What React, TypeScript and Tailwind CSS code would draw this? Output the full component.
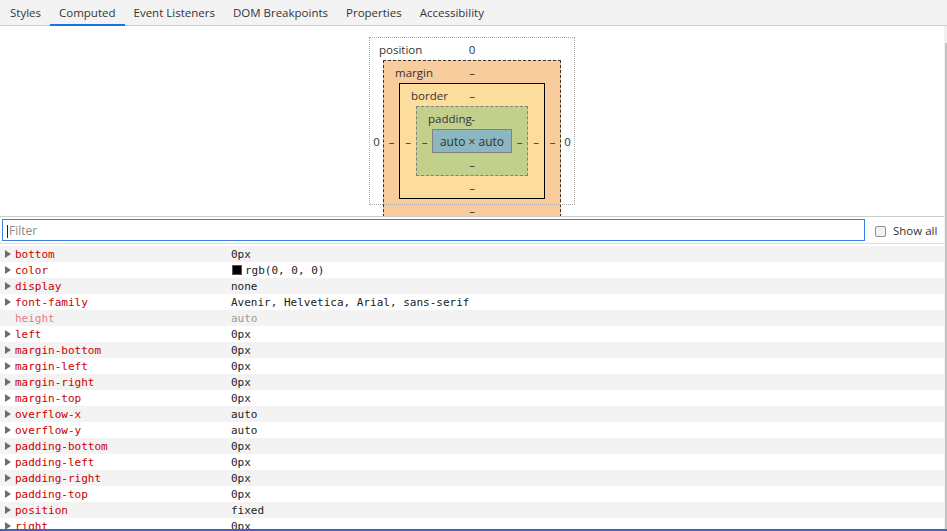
import React from 'react';

const tabs = ['Styles', 'Computed', 'Event Listeners', 'DOM Breakpoints', 'Properties', 'Accessibility'];

interface Prop {
  name: string;
  value: string;
  faded?: boolean;
  swatch?: boolean;
}

const props: Prop[] = [
  { name: 'bottom', value: '0px' },
  { name: 'color', value: 'rgb(0, 0, 0)', swatch: true },
  { name: 'display', value: 'none' },
  { name: 'font-family', value: 'Avenir, Helvetica, Arial, sans-serif' },
  { name: 'height', value: 'auto', faded: true },
  { name: 'left', value: '0px' },
  { name: 'margin-bottom', value: '0px' },
  { name: 'margin-left', value: '0px' },
  { name: 'margin-right', value: '0px' },
  { name: 'margin-top', value: '0px' },
  { name: 'overflow-x', value: 'auto' },
  { name: 'overflow-y', value: 'auto' },
  { name: 'padding-bottom', value: '0px' },
  { name: 'padding-left', value: '0px' },
  { name: 'padding-right', value: '0px' },
  { name: 'padding-top', value: '0px' },
  { name: 'position', value: 'fixed' },
  { name: 'right', value: '0px' },
];

const ui = { fontFamily: '"Open Sans", "Noto Sans", sans-serif' };
const mono = { fontFamily: '"DejaVu Sans Mono", "Liberation Mono", monospace' };

const Triangle = () => (
  <svg width="6" height="8" viewBox="0 0 6 8" className="shrink-0">
    <path d="M0 0 L6 4 L0 8 Z" fill="#6e6e6e" />
  </svg>
);

const BoxModel = () => (
  <div className="relative w-[206px] text-[11.5px] text-[#333] leading-none [&_span]:translate-y-px">
    {/* dotted outline of the position box sits over the overflowing margin box */}
    <div className="absolute left-0 top-0 w-[206px] h-[168px] border border-dotted border-[#a8a8a8] pointer-events-none z-10" />
    <div className="relative h-[23px] flex items-center justify-center pt-px">
      <span className="absolute left-[10px]">position</span>
      <span>0</span>
    </div>
    <div className="flex items-center">
      <div className="w-[14px] flex justify-center pl-px"><span>0</span></div>
      {/* margin */}
      <div className="w-[178px] bg-[#f9cc9d] border border-dashed border-[#333]">
        <div className="relative h-[22px] flex items-center justify-center">
          <span className="absolute left-[11px]">margin</span>
          <span>–</span>
        </div>
        <div className="flex items-center">
          <div className="w-[15px] flex justify-center"><span>–</span></div>
          {/* border */}
          <div className="w-[146px] bg-[#fddd9b] border border-black">
            <div className="relative h-[22px] flex items-center justify-center">
              <span className="absolute left-[11px]">border</span>
              <span>–</span>
            </div>
            <div className="flex items-center">
              <div className="w-[16px] flex justify-center"><span>–</span></div>
              {/* padding */}
              <div className="w-[112px] bg-[#c3d08b] border border-dashed border-[#808080]">
                <div className="relative h-[22px] flex items-center justify-center">
                  <span className="absolute left-[11px]">padding</span>
                  <span className="pl-[2px]">-</span>
                </div>
                <div className="flex items-center">
                  <div className="w-[15px] flex justify-center"><span>–</span></div>
                  <div className="w-[80px] h-[24px] bg-[#8cb6c0] border border-[#808080] flex items-center justify-center text-[12px]">
                    <span>auto × auto</span>
                  </div>
                  <div className="w-[15px] flex justify-center"><span>–</span></div>
                </div>
                <div className="h-[22px] flex items-center justify-center"><span>–</span></div>
              </div>
              <div className="w-[16px] flex justify-center"><span>–</span></div>
            </div>
            <div className="h-[22px] flex items-center justify-center"><span>–</span></div>
          </div>
          <div className="w-[15px] flex justify-center"><span>–</span></div>
        </div>
        <div className="h-[22px] flex items-center justify-center"><span>–</span></div>
      </div>
      <div className="w-[14px] flex justify-center pr-px"><span>0</span></div>
    </div>
    <div className="h-[23px] flex items-center justify-center"><span>0</span></div>
  </div>
);

export default function App() {
  return (
    <div className="w-[947px] h-[531px] overflow-hidden bg-white flex flex-col" style={ui}>
      {/* Tab bar */}
      <div className="flex h-[26px] shrink-0 bg-[#f3f3f3] border-b border-[#cccccc] text-[11.5px] text-[#333] pl-px">
        {tabs.map((t) => (
          <div
            key={t}
            className={
              t === 'Computed'
                ? 'h-[26px] -mb-px flex items-center px-[9px] border-b-2 border-[#1a73e8] pt-[1px]'
                : 'h-[25px] flex items-center px-[9px]'
            }
          >
            {t}
          </div>
        ))}
      </div>

      <div className="flex flex-1 min-h-0 border-b-2 border-[#4a5dc7]">
        <div className="flex-1 flex flex-col min-w-0">
          {/* Box model */}
          <div className="h-[191px] shrink-0 overflow-hidden border-b border-[#cccccc] flex justify-center pt-[11px]">
            <BoxModel />
          </div>

          {/* Filter bar */}
          <div className="h-[27px] shrink-0 flex items-start border-b border-[#e0e0e0]">
            <div className="ml-[2px] mt-[2px] w-[863px] h-[22px] border border-[#3c82e0] flex items-center text-[12px]">
              <span className="ml-[4px] w-px h-[13px] bg-[#222] relative top-px" />
              <span className="ml-px text-[#8a8a8a] relative top-px">Filter</span>
            </div>
            <div className="ml-[10px] mt-[7px] flex items-center gap-[7px] text-[11.5px] text-[#333]">
              <span className="w-[11px] h-[11px] rounded-[2px] border border-[#8f8f8f] bg-[#f2f2f2]" />
              <span className="leading-[14px]">Show all</span>
            </div>
          </div>

          {/* Properties */}
          <div className="flex-1 min-h-0 overflow-hidden pt-[2px] text-[11px]" style={mono}>
            {props.map((p, i) => (
              <div
                key={p.name}
                className={`h-[16px] flex items-center ${i % 2 === 0 ? 'bg-[#f3f3f3]' : 'bg-white'}`}
              >
                <div className="w-[231px] flex items-center shrink-0">
                  <div className="w-[15px] flex justify-start pl-[5px]">{!p.faded && <Triangle />}</div>
                  <span className={`relative top-px ${p.faded ? 'text-[#e08080]' : 'text-[#c80000]'}`}>{p.name}</span>
                </div>
                {p.swatch && <span className="w-[10px] h-[10px] bg-black border border-[#555] mr-[3px] ml-px" />}
                <span className={`relative top-px ${p.faded ? 'text-[#9a9a9a]' : 'text-[#222]'}`}>{p.value}</span>
              </div>
            ))}
          </div>
        </div>

        {/* Scrollbar */}
        <div className="w-[3px] shrink-0 bg-[#f1f1f1] flex justify-end pt-[17px]">
          <div className="w-[2px] h-full bg-[#c4c4c4]" />
        </div>
      </div>
    </div>
  );
}
